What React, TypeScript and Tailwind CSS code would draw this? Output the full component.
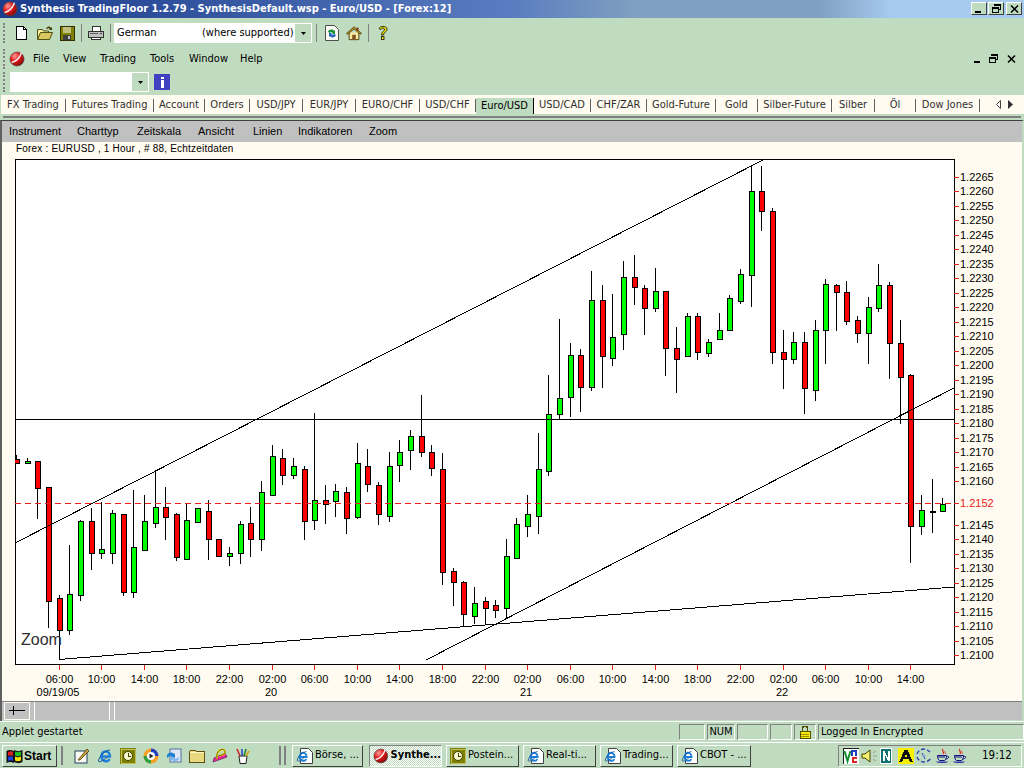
import type { ReactNode } from "react"

const raised = "border border-t-white border-l-white border-r-[#404040] border-b-[#404040]"
const sunken = "border border-t-[#808080] border-l-[#808080] border-r-white border-b-white"

// [colour, wick top, body top, body bottom, wick bottom]
const candles: [string, number, number, number, number][] = [
  ["r", 455, 459, 463, 463], ["g", 458, 461, 463, 463], ["r", 461, 461, 488, 519], ["r", 487, 487, 601, 628],
  ["r", 595, 598, 630, 630], ["g", 545, 594, 630, 635], ["g", 520, 521, 595, 601], ["r", 508, 521, 553, 570],
  ["g", 502, 549, 553, 559], ["g", 510, 513, 553, 564], ["r", 514, 514, 592, 596], ["g", 490, 547, 592, 598],
  ["g", 495, 521, 550, 550], ["g", 472, 507, 523, 528], ["r", 487, 507, 517, 540], ["r", 513, 514, 557, 561],
  ["g", 503, 520, 559, 559], ["g", 508, 508, 522, 522], ["r", 500, 511, 539, 560], ["r", 539, 539, 556, 557],
  ["g", 547, 553, 556, 566], ["g", 521, 524, 553, 564], ["r", 507, 523, 539, 557], ["g", 481, 492, 539, 551],
  ["g", 445, 456, 495, 495], ["r", 449, 458, 475, 485], ["g", 458, 466, 475, 479], ["r", 466, 469, 521, 540],
  ["g", 413, 500, 520, 530], ["r", 485, 500, 504, 524], ["g", 484, 491, 501, 517], ["r", 487, 492, 518, 534],
  ["g", 443, 463, 517, 519], ["r", 449, 466, 484, 492], ["r", 482, 485, 514, 525], ["g", 452, 466, 516, 522],
  ["g", 440, 452, 465, 482], ["g", 430, 436, 450, 470], ["r", 395, 436, 452, 457], ["r", 445, 452, 468, 476],
  ["r", 453, 469, 572, 585], ["r", 568, 571, 582, 606], ["r", 581, 582, 614, 626], ["g", 587, 603, 616, 624],
  ["r", 597, 601, 608, 625], ["r", 600, 605, 610, 618], ["g", 539, 556, 608, 618], ["g", 518, 524, 558, 559],
  ["g", 495, 514, 526, 537], ["g", 433, 469, 516, 534], ["g", 375, 414, 471, 476], ["g", 319, 398, 414, 419],
  ["g", 343, 355, 397, 417], ["r", 349, 355, 387, 412], ["g", 271, 300, 387, 391], ["r", 285, 300, 356, 388],
  ["g", 294, 337, 358, 366], ["g", 261, 277, 334, 350], ["r", 255, 277, 287, 305], ["r", 285, 288, 308, 335],
  ["g", 268, 291, 308, 312], ["r", 291, 291, 348, 376], ["r", 327, 348, 359, 393], ["g", 313, 316, 356, 356],
  ["r", 313, 316, 352, 360], ["g", 339, 342, 353, 357], ["g", 313, 330, 339, 339], ["g", 295, 298, 330, 330],
  ["g", 269, 274, 301, 304], ["g", 166, 191, 275, 307], ["r", 166, 191, 211, 231], ["r", 208, 211, 352, 364],
  ["r", 330, 352, 359, 389], ["g", 332, 342, 359, 364], ["r", 332, 342, 388, 414], ["g", 320, 330, 390, 401],
  ["g", 279, 284, 330, 364], ["r", 284, 285, 292, 331], ["r", 281, 292, 321, 325], ["r", 316, 320, 333, 343],
  ["g", 297, 307, 333, 364], ["g", 264, 285, 308, 312], ["r", 282, 285, 343, 379], ["r", 320, 343, 377, 424],
  ["r", 374, 375, 526, 563], ["g", 495, 510, 526, 535], ["k", 479, 511, 511, 533], ["g", 498, 504, 511, 511],
]

const priceLabels = [
  "1.2265", "1.2260", "1.2255", "1.2250", "1.2245", "1.2240", "1.2235", "1.2230", "1.2225", "1.2220", "1.2215",
  "1.2210", "1.2205", "1.2200", "1.2195", "1.2190", "1.2185", "1.2180", "1.2175", "1.2170", "1.2165", "1.2160",
  "1.2155", "1.2150", "1.2145", "1.2140", "1.2135", "1.2130", "1.2125", "1.2120", "1.2115", "1.2110", "1.2105", "1.2100",
]

const timeTicks: [number, string][] = [
  [59, "06:00"], [101, "10:00"], [144, "14:00"], [186, "18:00"], [229, "22:00"], [272, "02:00"], [314, "06:00"],
  [357, "10:00"], [399, "14:00"], [442, "18:00"], [485, "22:00"], [527, "02:00"], [570, "06:00"], [612, "10:00"],
  [655, "14:00"], [697, "18:00"], [740, "22:00"], [783, "02:00"], [825, "06:00"], [868, "10:00"], [910, "14:00"],
]

const dateLabels: [number, string][] = [[58, "09/19/05"], [271, "20"], [526, "21"], [782, "22"]]

function RedBall({ size = 18 }: { size?: number }) {
  return (
    <svg width={size} height={size} viewBox="0 0 18 18">
      <defs>
        <radialGradient id="ball" cx="0.35" cy="0.3" r="0.8">
          <stop offset="0" stopColor="#ff9a9a" />
          <stop offset="0.45" stopColor="#e01818" />
          <stop offset="1" stopColor="#700808" />
        </radialGradient>
      </defs>
      <circle cx="9" cy="9" r="8" fill="url(#ball)" stroke="#505050" strokeWidth="0.7" />
      <path d="M3 13 C7 12 12 8 14 2" fill="none" stroke="#f4f4f4" strokeWidth="1.6" />
    </svg>
  )
}

function Gripper({ h = "h-[20px]" }: { h?: string }) {
  return <div className={`w-[3px] border-l-2 border-dotted border-[#808080] ${h}`} />
}

function ToolSep() {
  return <div className="h-[18px] w-px bg-[#808080]" />
}

function IconNew() {
  return (
    <svg width="16" height="16" viewBox="0 0 16 16" shapeRendering="crispEdges">
      <path d="M3.500 1.500h7l3 3v10h-10z" fill="#fff" stroke="#000" />
      <path d="M10.500 1.500v3h3" fill="none" stroke="#000" />
    </svg>
  )
}

function IconOpen() {
  return (
    <svg width="18" height="16" viewBox="0 0 18 16">
      <path d="M1.500 4.500h5l1 1.500h5v2H5l-3.500 6z" fill="#f8f0a0" stroke="#505010" />
      <path d="M1.500 14.500l3-7h12l-3 7z" fill="#d8c860" stroke="#505010" />
      <path d="M10 3c2-2 4-2 5 0l1-1v3h-3l1-1c-1-1-2-1-3 0z" fill="#404000" />
    </svg>
  )
}

function IconSave() {
  return (
    <svg width="16" height="16" viewBox="0 0 16 16" shapeRendering="crispEdges">
      <rect x="1" y="1" width="14" height="14" fill="#808000" stroke="#303000" />
      <rect x="4" y="1.500" width="8" height="6" fill="#c0c080" />
      <rect x="4" y="10" width="8" height="5" fill="#404040" />
      <rect x="9" y="11" width="2" height="3" fill="#c0c0c0" />
    </svg>
  )
}

function IconPrint() {
  return (
    <svg width="18" height="16" viewBox="0 0 18 16" shapeRendering="crispEdges">
      <path d="M5.500 1.500h8v5h-8z" fill="#fff" stroke="#303030" />
      <path d="M1.500 6.500h15v6h-15z" fill="#c0c0c0" stroke="#303030" />
      <path d="M4.500 12.500h9v2h-9z" fill="#fff" stroke="#303030" />
      <rect x="3" y="8" width="8" height="1" fill="#606060" />
      <rect x="13" y="8" width="2" height="1" fill="#404040" />
    </svg>
  )
}

function IconRefresh() {
  return (
    <svg width="16" height="18" viewBox="0 0 16 18">
      <path d="M1.500 1.500h9l4 4v11h-13z" fill="#f8f8f0" stroke="#505050" />
      <path d="M4 8c1-3 5-3 6-1l1-1v4H8l1-1c-1-1-3-1-3 0z" fill="#109030" />
      <path d="M12 11c-1 3-5 3-6 1l-1 1V9h3l-1 1c1 1 3 1 3 0z" fill="#2060c0" />
    </svg>
  )
}

function IconHome() {
  return (
    <svg width="16" height="16" viewBox="0 0 18 16">
      <path d="M3.500 7.500v8h11v-8" fill="#f8e8a0" stroke="#403000" />
      <path d="M0.500 8.500L9 1l8.500 7.500-1.500 1L9 3.500 2 9.500z" fill="#b89020" stroke="#403000" strokeWidth="0.800" />
      <rect x="7" y="10" width="4" height="5.500" fill="#805020" />
      <rect x="12" y="2" width="2" height="3" fill="#802000" />
    </svg>
  )
}

function IconHelp() {
  return (
    <svg width="12" height="16" viewBox="0 0 12 16">
      <path
        d="M2 3.500C3 1 9 0.500 10 3.500c0.800 3-3.500 3.500-3.500 6.500h-2c0-3.500 3.500-4 3-6-0.500-1.500-3-1.200-3.500 0.500z"
        fill="#f8e800"
        stroke="#202000"
        strokeWidth="0.900"
      />
      <rect x="4.500" y="11.500" width="2.500" height="3" fill="#f8e800" stroke="#202000" strokeWidth="0.900" />
    </svg>
  )
}

function IconIE({ size = 16 }: { size?: number }) {
  return (
    <svg width={size} height={size} viewBox="0 0 16 16">
      <path d="M3 8.500h10C13 4 9 2.500 6.500 4 4 5.500 3.500 11.500 7.500 13c2.500 0.800 4.500-0.500 5-2" fill="none" stroke="#2080d8" strokeWidth="2.400" />
      <path d="M13 2C9 2 2 8 1.500 13c0.500 2 5-0.500 9-4" fill="none" stroke="#1050a0" strokeWidth="1" />
    </svg>
  )
}

function IconIEDoc() {
  return (
    <span className="relative block h-[16px] w-[17px]">
      <svg className="absolute top-0 left-[4px]" width="13" height="16" viewBox="0 0 13 16">
        <path d="M0.500 0.500h8l4 4v11h-12z" fill="#fff" stroke="#404040" />
      </svg>
      <span className="absolute top-[2px] left-0">
        <IconIE size={13} />
      </span>
    </span>
  )
}

function IconClockBox() {
  return (
    <svg width="16" height="16" viewBox="0 0 16 16" shapeRendering="crispEdges">
      <rect width="16" height="16" fill="#808000" />
      <rect x="1" y="1" width="14" height="14" fill="none" stroke="#c0c060" />
      <circle cx="8" cy="8" r="4.500" fill="#f8f8d0" stroke="#404000" shapeRendering="auto" />
      <path d="M8 5v3h3" fill="none" stroke="#404000" />
    </svg>
  )
}

function IconFolder() {
  return (
    <svg width="16" height="14" viewBox="0 0 16 14" shapeRendering="crispEdges">
      <path d="M0.500 2.500l1-1h5l1 1h8v11h-15z" fill="#e8d880" stroke="#605010" />
      <rect x="1" y="3" width="14" height="1" fill="#fff8c0" />
    </svg>
  )
}

function QuickLaunch() {
  return (
    <>
      <svg width="16" height="16" viewBox="0 0 16 16" className="shrink-0">
        <rect x="1" y="3" width="12" height="12" fill="#f8f8f0" stroke="#204060" />
        <path d="M4 12l9-11 2 2-9 9z" fill="#d0a040" stroke="#303000" strokeWidth="0.700" />
      </svg>
      <IconIE />
      <IconClockBox />
      <svg width="16" height="16" viewBox="0 0 16 16">
        <circle cx="8" cy="8" r="7.500" fill="#f8a020" />
        <path d="M8 0.500A7.500 7.500 0 0 1 15.500 8H8z" fill="#2040c0" />
        <path d="M8 8H0.500A7.500 7.500 0 0 0 8 15.500z" fill="#30a040" />
        <circle cx="8" cy="8" r="4" fill="#fff" />
        <path d="M6.500 5.500l4 2.500-4 2.500z" fill="#202020" />
      </svg>
      <svg width="16" height="16" viewBox="0 0 16 16">
        <rect x="4" y="1" width="11" height="13" fill="#e0e8f8" stroke="#5070a0" />
        <path d="M1 7c2-3 5-3 7-1l1-1v5H5l1-1C5 8 3 8 1 10z" fill="#2080d0" />
        <path d="M13 11c-2 3-5 3-7 1l-1 1V9h4l-1 1c1 1 3 1 5-1z" fill="#80b8f0" />
      </svg>
      <IconFolder />
      <svg width="16" height="16" viewBox="0 0 16 16">
        <path d="M1 14l14-5-2-4-11 5z" fill="#f020a0" stroke="#401040" strokeWidth="0.600" />
        <path d="M5 11C4 5 7 1 11 1.500c4 1 2 6-4 6" fill="none" stroke="#f8e000" strokeWidth="2" />
        <path d="M5 11C4 5 7 1 11 1.500c4 1 2 6-4 6" fill="none" stroke="#101010" strokeWidth="0.600" />
      </svg>
      <svg width="16" height="16" viewBox="0 0 16 16">
        <path d="M4 8h8l-1 7.500H5z" fill="#fff" stroke="#202020" />
        <path d="M5 8L2 1" stroke="#d02020" strokeWidth="1.500" />
        <path d="M7 8V1" stroke="#2040c0" strokeWidth="1.500" />
        <path d="M9 8l2-7" stroke="#208030" strokeWidth="1.500" />
        <path d="M11 8l3-5" stroke="#d0a000" strokeWidth="1.500" />
      </svg>
    </>
  )
}

function JavaCup() {
  return (
    <svg width="16" height="16" viewBox="0 0 16 16">
      <path d="M8 1c-2 2 2 2 0 5" fill="none" stroke="#e02020" strokeWidth="1.200" />
      <path d="M10 3c-1 1 1 1 0 3" fill="none" stroke="#e02020" strokeWidth="0.800" />
      <path d="M2.500 7.500h9c0 3-1 4.500-2 5h-5c-1-0.500-2-2-2-5z" fill="none" stroke="#101080" />
      <path d="M11.500 8.500c3-1 3 2-0.500 2.500" fill="none" stroke="#101080" />
      <path d="M1 13.500h12c-1 2-11 2-12 0z" fill="#3030a0" />
      <path d="M3 9h7" stroke="#101080" />
    </svg>
  )
}

function TrayIcons() {
  return (
    <div className="flex items-center">
      <svg width="16" height="16" viewBox="0 0 16 16" shapeRendering="crispEdges" className="mr-[2px]">
        <rect width="16" height="16" fill="#fff" stroke="#202020" />
        <path d="M1.500 3l3 10 3-10" fill="none" stroke="#109030" strokeWidth="2" shapeRendering="auto" />
        <path d="M9 8V3h4v5" fill="none" stroke="#2040c0" strokeWidth="1.300" />
        <path d="M14 10H10v4h4" fill="none" stroke="#e02020" strokeWidth="1.300" />
      </svg>
      <svg width="17" height="16" viewBox="0 0 17 16" className="mr-[2px]">
        <path d="M1 6h3l5-4v12l-5-4H1z" fill="#f8f070" stroke="#404000" />
        <path d="M12 5l3-2M12 8h4M12 11l3 2" stroke="#a0a0a0" />
      </svg>
      <svg width="12" height="16" viewBox="0 0 12 16" shapeRendering="crispEdges" className="mr-[6px]">
        <rect width="12" height="16" fill="#fff" />
        <rect x="1" y="1" width="10" height="14" fill="#107070" />
        <path d="M3 13V3h1.500L8 10V3h1.500v10H8L4.500 6v7z" fill="#fff" />
      </svg>
      <svg width="16" height="16" viewBox="0 0 16 16" shapeRendering="crispEdges" className="mr-[2px]">
        <rect width="16" height="16" fill="#f8f000" />
        <path d="M1 14h3l1.500-3h5L12 14h3L9.500 2h-3z" fill="#101010" />
        <path d="M6.500 9L8 5.500 9.500 9z" fill="#f8f000" />
      </svg>
      <svg width="16" height="16" viewBox="0 0 16 16" className="mr-[3px]">
        <path d="M1 6c1-3 4-5 7-5s5 2 7 4M1 9c1 3 4 5 7 5s6-2 7-4" fill="none" stroke="#2040b0" strokeWidth="1.300" strokeDasharray="4 2" />
        <path d="M6 5l3 6" stroke="#2040b0" />
        <circle cx="8" cy="8" r="1.500" fill="#80a0e0" />
      </svg>
      <div className="mr-px">
        <JavaCup />
      </div>
      <JavaCup />
    </div>
  )
}

function StartFlag() {
  return (
    <svg width="17" height="16" viewBox="0 0 17 16">
      <path d="M0.500 3c2-1.500 4-1.500 7.500 0v12c-3-1.500-5-1.500-7.500 0z" fill="#101010" />
      <path d="M8 2c3 1.500 5 1.500 8.500 0v12c-3 1.500-5 1.500-8.500 0z" fill="#101010" />
      <path d="M2 4c2-1 3-1 5 0v4c-2-1-3-1-5 0z" fill="#e02020" />
      <path d="M2 9c2-1 3-1 5 0v4c-2-1-3-1-5 0z" fill="#2040e0" />
      <path d="M9 3.500c2 1 3 1 6 0v4c-3 1-4 1-6 0z" fill="#20c020" />
      <path d="M9 8.500c2 1 3 1 6 0v4c-3 1-4 1-6 0z" fill="#f8e000" />
    </svg>
  )
}

function Combo({ w, children }: { w: string; children?: ReactNode }) {
  return (
    <div className={`flex h-[20px] items-stretch border border-white bg-white ${w}`}>
      <div className="flex flex-1 items-center pl-[2px] text-[11px] whitespace-nowrap">{children}</div>
      <div className="flex w-[16px] items-center justify-center bg-[#c0dcc0]">
        <svg width="5" height="3" viewBox="0 0 5 3">
          <path d="M0 0h5L2.500 3z" fill="#000" />
        </svg>
      </div>
    </div>
  )
}

function CaptionButton({ children }: { children: ReactNode }) {
  return <div className={`flex h-[13px] w-[16px] items-center justify-center bg-[#c0dcc0] ${raised}`}>{children}</div>
}

function RestoreGlyph() {
  return (
    <svg width="9" height="9" viewBox="0 0 9 9" shapeRendering="crispEdges">
      <path d="M2.500 2V0.500h6v5H7" fill="none" stroke="#000" />
      <rect x="2" y="0" width="7" height="1.500" fill="#000" />
      <path d="M0.500 3.500h6v5h-6z" fill="none" stroke="#000" />
      <rect x="0" y="3" width="7" height="1.500" fill="#000" />
    </svg>
  )
}

function CloseGlyph() {
  return (
    <svg width="9" height="8" viewBox="0 0 9 8">
      <path d="M1 0.500l7 7M8 0.500l-7 7" stroke="#000" strokeWidth="1.500" />
    </svg>
  )
}

function TitleBar() {
  return (
    <div className="flex h-[18px] items-center bg-[linear-gradient(90deg,#1a3c8c_0%,#5a7cc0_50%,#7fa0c0_62%,#7fa0c0_80%,#a6caf0_87%,#a6caf0_100%)] pl-[2px]">
      <RedBall size={16} />
      <span className="ml-[2px] flex-1 text-[11px] font-bold whitespace-nowrap text-white">
        Synthesis TradingFloor 1.2.79 - SynthesisDefault.wsp - Euro/USD - [Forex:12]
      </span>
      <div className="mr-[2px] flex gap-px">
        <CaptionButton>
          <div className="mt-[6px] mr-[3px] h-[2px] w-[6px] bg-black" />
        </CaptionButton>
        <CaptionButton>
          <RestoreGlyph />
        </CaptionButton>
        <div className="ml-px">
          <CaptionButton>
            <CloseGlyph />
          </CaptionButton>
        </div>
      </div>
    </div>
  )
}

function MainToolbar() {
  return (
    <div className="flex h-[28px] items-center pt-[3px] pl-[3px]">
      <Gripper />
      <div className="ml-[7px] w-[23px]">
        <IconNew />
      </div>
      <div className="w-[23px]">
        <IconOpen />
      </div>
      <div className="w-[22px]">
        <IconSave />
      </div>
      <ToolSep />
      <div className="ml-[5px] w-[23px]">
        <IconPrint />
      </div>
      <ToolSep />
      <div className="ml-[3px]">
        <Combo w="w-[198px]">
          <span className="w-[85px]">German</span>
          <span>(where supported)</span>
        </Combo>
      </div>
      <div className="ml-[4px]">
        <ToolSep />
      </div>
      <div className="ml-[7px] w-[22px]">
        <IconRefresh />
      </div>
      <div className="w-[22px]">
        <IconHome />
      </div>
      <ToolSep />
      <div className="ml-[8px]">
        <IconHelp />
      </div>
    </div>
  )
}

const menuItems: [string, string][] = [
  ["File", "w-[30px]"], ["View", "w-[37px]"], ["Trading", "w-[50px]"], ["Tools", "w-[39px]"], ["Window", "w-[51px]"], ["Help", "w-[30px]"],
]

function MenuBar() {
  return (
    <div className="flex h-[24px] items-center pt-[2px] pl-[3px] text-[11px]">
      <Gripper />
      <div className="ml-[3px] w-[24px]">
        <RedBall size={16} />
      </div>
      <div className="flex flex-1">
        {menuItems.map(([label, w]) => (
          <span key={label} className={w}>
            {label}
          </span>
        ))}
      </div>
      <div className="mr-[8px] flex items-center gap-[9px]">
        <div className="mt-[7px] h-[2px] w-[6px] bg-black" />
        <RestoreGlyph />
        <CloseGlyph />
      </div>
    </div>
  )
}

function SymbolBar() {
  return (
    <div className="flex h-[25px] items-center pl-[3px]">
      <Gripper />
      <div className="ml-[4px]">
        <Combo w="w-[139px]" />
      </div>
      <div className="ml-[5px] flex h-[16px] w-[16px] flex-col items-center justify-center bg-[#4040c0]">
        <div className="h-[2px] w-[3px] bg-white" />
        <div className="mt-px h-[8px] w-[3px] bg-white" />
      </div>
    </div>
  )
}

const tabs: [string, string][] = [
  ["FX Trading", "w-[65px]"], ["Futures Trading", "w-[88px]"], ["Account", "w-[51px]"], ["Orders", "w-[45px]"],
  ["USD/JPY", "w-[53px]"], ["EUR/JPY", "w-[53px]"], ["EURO/CHF", "w-[64px]"], ["USD/CHF", "w-[56px]"],
  ["Euro/USD", "w-[58px]"], ["USD/CAD", "w-[57px]"], ["CHF/ZAR", "w-[56px]"], ["Gold-Future", "w-[69px]"],
  ["Gold", "w-[42px]"], ["Silber-Future", "w-[74px]"], ["Silber", "w-[43px]"], ["Öl", "w-[41px]"], ["Dow Jones", "w-[64px]"],
]

function TabStrip() {
  return (
    <div className="h-[25px]">
      <div className="ml-px flex h-[19px] items-stretch bg-[#fffbf0] text-[11px] text-[#303030]">
        {tabs.map(([label, w]) => (
          <div key={label} className={`flex items-center justify-center whitespace-nowrap ${w} ${label === "Euro/USD" ? "mt-[3px] border-r border-black bg-[#c0dcc0] text-black" : "mt-[4px] mb-[2px] border-r border-[#606060]"}`}>
            {label}
          </div>
        ))}
        <div className="flex flex-1 items-center justify-end gap-[7px] pr-[11px]">
          <svg width="5" height="9" viewBox="0 0 5 9">
            <path d="M4.500 0.500v8L0.500 4.500z" fill="#fff" stroke="#404040" />
          </svg>
          <svg width="5" height="9" viewBox="0 0 5 9">
            <path d="M0 0v9l5-4.500z" fill="#303030" />
          </svg>
        </div>
      </div>
      <div className="mt-[2px] ml-[3px] h-[2px] w-[1018px] bg-[#808080]" />
    </div>
  )
}

const chartMenu: [string, string][] = [
  ["Instrument", "w-[68px]"], ["Charttyp", "w-[60px]"], ["Zeitskala", "w-[61px]"], ["Ansicht", "w-[55px]"],
  ["Linien", "w-[45px]"], ["Indikatoren", "w-[71px]"], ["Zoom", "w-[40px]"],
]

function CandleChart() {
  return (
    <svg width="1020" height="546" viewBox="2 155 1020 546" className="block" fontFamily="'Liberation Sans', sans-serif" fontSize="11">
      <defs>
        <clipPath id="plot">
          <rect x="15" y="159" width="940" height="506" />
        </clipPath>
      </defs>
      <rect x="15.500" y="159.500" width="939" height="505" fill="#fff" stroke="#000" shapeRendering="crispEdges" />

      <g clipPath="url(#plot)" shapeRendering="crispEdges">
        {candles.map(([c, top, b1, b2, bot], i) => {
          const x = Math.floor(16.65 + 10.645 * i)
          return (
            <g key={i}>
              <line x1={x + 0.5} x2={x + 0.5} y1={top} y2={bot} stroke="#000" />
              {c === "k" ? (
                <rect x={x - 2} y={b1} width="6" height="2" fill="#000" />
              ) : (
                <rect
                  x={x - 1.5}
                  y={b1 + 0.5}
                  width="5"
                  height={b2 - b1}
                  fill={c === "r" ? "#ff0000" : "#00ff00"}
                  stroke="#000"
                />
              )}
            </g>
          )
        })}
      </g>

      <g clipPath="url(#plot)" stroke="#000" fill="none" shapeRendering="crispEdges">
        <line x1="15" y1="543" x2="763" y2="160" />
        <line x1="59.500" y1="630" x2="59.500" y2="659.500" />
        <line x1="59" y1="659.500" x2="954" y2="587" />
        <line x1="426" y1="660" x2="954" y2="388" />
        <line x1="15" y1="419.500" x2="954" y2="419.500" />
        <line x1="15" y1="503.500" x2="954" y2="503.500" stroke="#e82020" strokeDasharray="6 4" />
      </g>

      <text x="21" y="645" fontSize="16" fill="#303030">
        Zoom
      </text>

      {priceLabels.map((label, i) => {
        const y = Math.round(176.5 + (478.5 / 33) * i)
        if (label === "1.2155") return null
        if (label === "1.2150") {
          return (
            <g key={label}>
              <line x1="954" x2="959" y1="503.500" y2="503.500" stroke="#e82020" shapeRendering="crispEdges" />
              <text x="960" y="507" fill="#e82020">
                1.2152
              </text>
            </g>
          )
        }
        return (
          <g key={label}>
            <line x1="954" x2="959" y1={y + 0.5} y2={y + 0.5} stroke="#e82020" shapeRendering="crispEdges" />
            <text x="960" y={y + 4} fill="#000">
              {label}
            </text>
          </g>
        )
      })}

      {timeTicks.map(([x, label], i) => (
        <g key={i}>
          <line x1={x + 0.5} x2={x + 0.5} y1="665" y2="670" stroke="#e82020" shapeRendering="crispEdges" />
          <text x={x + 0.5} y="683" textAnchor="middle" fill="#000">
            {label}
          </text>
        </g>
      ))}
      {dateLabels.map(([x, label]) => (
        <text key={label} x={x} y="696" textAnchor="middle" fill="#000">
          {label}
        </text>
      ))}
    </svg>
  )
}

function ChartWindow() {
  return (
    <div className="ml-0 flex h-[602px] flex-col border-t border-l-2 border-[#606060] border-t-[#404040] border-r-2 border-r-[#c0dcc0]">
      <div className="flex h-[21px] items-center bg-[#c0c0c0] pl-[7px] font-['Liberation_Sans',sans-serif] text-[11px]">
        {chartMenu.map(([label, w]) => (
          <span key={label} className={w}>
            {label}
          </span>
        ))}
      </div>
      <div className="flex h-[13px] items-center bg-[#fffbf0] pl-[14px] font-['Liberation_Sans',sans-serif] text-[10px] tracking-[0.2px]">
        Forex : EURUSD , 1 Hour , # 88, Echtzeitdaten
      </div>
      <div className="bg-[#fffbf0]">
        <CandleChart />
      </div>
      <div className="flex h-[19px] items-stretch gap-[4px] border-t border-[#808080] bg-[#c0c0c0] pl-[2px]">
        <div className="flex w-[26px] items-center justify-center border border-[#fffbf0]">
          <svg width="16" height="9" viewBox="0 0 16 9" shapeRendering="crispEdges">
            <path d="M0 4.500h16M4.500 0v9" stroke="#000" />
          </svg>
        </div>
        <div className="w-[76px] border-r border-l border-[#fffbf0]" />
        <div className="flex-1 border-l border-[#fffbf0]" />
      </div>
    </div>
  )
}

const statusPanels: [string, string][] = [
  ["", "w-[26px]"], ["NUM", "w-[28px]"], ["", "w-[31px]"], ["", "w-[22px]"],
]

function StatusBar() {
  return (
    <div className="flex h-[21px] items-center border-t border-white pl-[2px] text-[11px]">
      <span className="flex-1">Applet gestartet</span>
      <div className="flex items-stretch gap-[2px]">
        {statusPanels.map(([label, w], i) => (
          <div key={i} className={`flex h-[16px] items-center justify-center border border-[#808080] border-r-white border-b-white ${w}`}>
            {label}
          </div>
        ))}
        <div className="flex h-[16px] w-[22px] items-center justify-center border border-[#808080] border-r-white border-b-white">
          <svg width="12" height="14" viewBox="0 0 12 14" shapeRendering="crispEdges">
            <path d="M3.500 6V3.500c0-3 5-3 5 0V6" fill="none" stroke="#505000" strokeWidth="1.500" />
            <rect x="1" y="6" width="10" height="7.500" fill="#f8e800" stroke="#505000" />
            <path d="M2 9h8M2 11h8" stroke="#a09000" />
          </svg>
        </div>
        <div className="flex h-[16px] w-[206px] items-center border border-[#808080] border-r-white border-b-white pl-[2px]">
          Logged In Encrypted
        </div>
      </div>
    </div>
  )
}

const taskButtons: [string, ReactNode, string][] = [
  ["Börse, ...", <IconIEDoc key="a" />, "mr-[2px] w-[71px]"],
  ["Synthe...", <RedBall key="b" size={16} />, "w-[73px]"],
  ["Postein...", <IconClockBox key="c" />, "w-[73px]"],
  ["Real-ti...", <IconIEDoc key="d" />, "w-[73px]"],
  ["Trading...", <IconIEDoc key="e" />, "w-[73px]"],
  ["CBOT - ...", <IconIEDoc key="f" />, "w-[74px]"],
]

function Taskbar() {
  return (
    <div className="flex h-[26px] items-center border-t border-white pl-[2px] text-[11px]">
      <div className={`flex h-[22px] w-[55px] items-center pl-[3px] text-[12px] ${raised}`}>
        <StartFlag />
        <span className="ml-[1px] font-['Liberation_Sans',sans-serif] font-bold">Start</span>
      </div>
      <div className="mx-[4px] h-[19px] w-[2px] bg-[#808080]" />
      <div className="ml-[7px] flex w-[183px] items-center gap-[7px]">
        <QuickLaunch />
      </div>
      <div className="ml-[22px] mr-[3px] h-[19px] w-[2px] bg-[#808080]" />
      <div className="h-[19px] w-[2px] bg-[#808080]" />
      <div className="ml-[6px] flex gap-[4px]">
        {taskButtons.map(([label, icon, w]) => {
          const active = label === "Synthe..."
          return (
            <div
              key={label}
              className={`flex h-[22px] items-center gap-[2px] overflow-hidden pl-[3px] whitespace-nowrap ${w} ${active ? `${sunken} bg-[repeating-conic-gradient(#ffffff_0_25%,#c0dcc0_0_50%)] bg-[length:2px_2px] font-bold` : raised}`}
            >
              {icon}
              <span>{label}</span>
            </div>
          )
        })}
      </div>
      <div className={`ml-[87px] flex h-[22px] w-[184px] items-center pl-[4px] ${sunken}`}>
        <TrayIcons />
        <span className="ml-[14px] text-[11.5px]">19:12</span>
      </div>
    </div>
  )
}

export default function App() {
  return (
    <div className="flex h-[768px] w-[1024px] flex-col overflow-hidden bg-[#c0dcc0] font-['DejaVu_Sans_Condensed','Noto_Sans',sans-serif] text-black">
      <TitleBar />
      <MainToolbar />
      <MenuBar />
      <SymbolBar />
      <TabStrip />
      <ChartWindow />
      <StatusBar />
      <Taskbar />
    </div>
  )
}
